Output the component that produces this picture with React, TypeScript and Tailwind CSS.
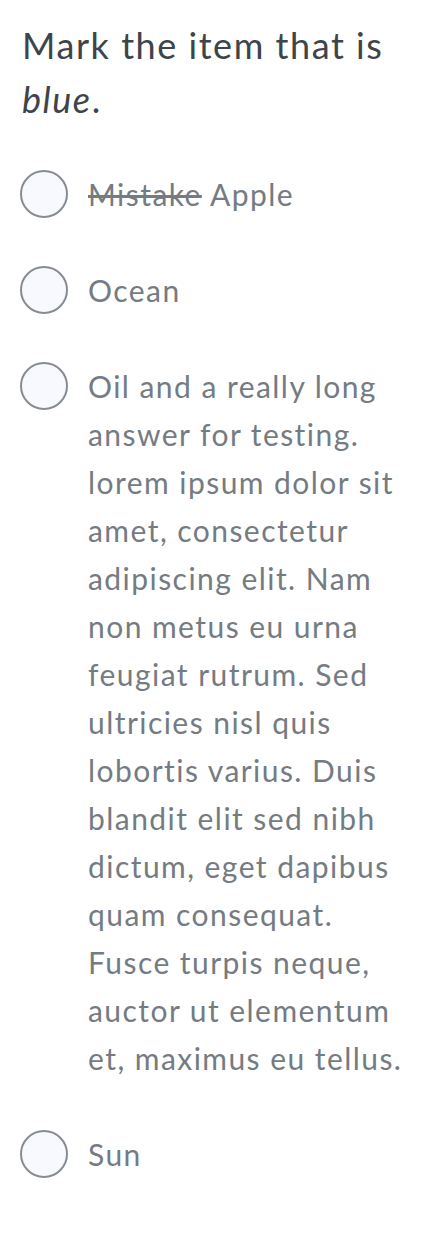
import React from "react";

const options: { id: string; label: React.ReactNode }[] = [
  {
    id: "a",
    label: (
      <>
        <s>Mistake</s> Apple
      </>
    ),
  },
  { id: "b", label: "Ocean" },
  {
    id: "c",
    label:
      "Oil and a really long answer for testing. lorem ipsum dolor sit amet, consectetur adipiscing elit. Nam non metus eu urna feugiat rutrum. Sed ultricies nisl quis lobortis varius. Duis blandit elit sed nibh dictum, eget dapibus quam consequat. Fusce turpis neque, auctor ut elementum et, maximus eu tellus.",
  },
  { id: "d", label: "Sun" },
];

export default function App() {
  return (
    <div className="min-h-screen bg-white px-5 pt-[18px] font-['Lato','Liberation_Sans',sans-serif]">
      {/* Question */}
      <h1 className="text-[36px] leading-[54px] tracking-[1.55px] font-normal text-[#3d444a] pl-[2px]">
        Mark the item that is <em>blue</em>.
      </h1>

      {/* Answers */}
      <div className="mt-[44px] flex flex-col gap-12">
        {options.map((opt) => (
          <label key={opt.id} className="flex items-start gap-5 cursor-pointer">
            <span className="shrink-0 w-12 h-12 rounded-full border-2 border-[#868c92] bg-[#f7f9fe]" />
            <span className="text-[30px] leading-[48px] tracking-[1.45px] text-[#747b82]">{opt.label}</span>
          </label>
        ))}
      </div>
    </div>
  );
}
